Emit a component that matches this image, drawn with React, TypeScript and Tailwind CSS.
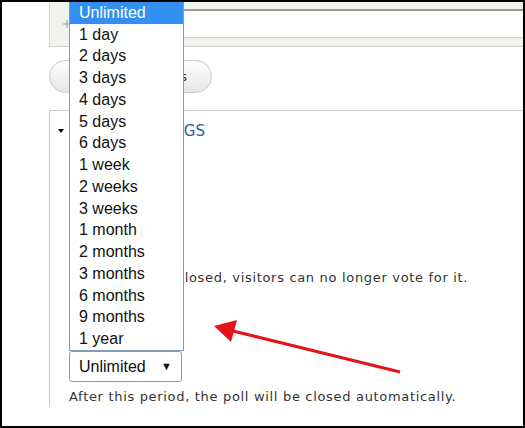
const durations = [
  "Unlimited",
  "1 day",
  "2 days",
  "3 days",
  "4 days",
  "5 days",
  "6 days",
  "1 week",
  "2 weeks",
  "3 weeks",
  "1 month",
  "2 months",
  "3 months",
  "6 months",
  "9 months",
  "1 year",
];

const App = () => {
  return (
    <div className="relative w-[525px] h-[428px] overflow-hidden border-2 border-black bg-white font-['DejaVu_Sans',sans-serif] text-[#333]">
      <div className="pl-[47px]">
        {/* choice row */}
        <div className="flex h-[45px] items-start border-b border-l border-[#cfcfcf] bg-[#f3f3ee]">
          <svg className="ml-[13px] mt-[18px]" width="8" height="8" viewBox="0 0 8 8">
            <path d="M4 0v8M0 4h8" stroke="#9aa3b0" strokeWidth="1.2" />
          </svg>
          <div className="ml-[16px] mt-[7px] h-[29px] flex-1 border-l border-t-2 border-b border-l-[#bbb] border-t-[#9a9a9a] border-b-[#d0d0d0] bg-white" />
        </div>

        {/* more choices button */}
        <div className="mt-[13px] flex h-[33px] w-[163px] items-center justify-end rounded-full border border-[#c8c8c8] bg-gradient-to-b from-[#fdfdfd] to-[#e6e6e6] pr-[24px] text-[13px] text-[#333]">
          More choices
        </div>

        {/* poll settings fieldset */}
        <div className="mt-[17px] border-l border-t border-[#c8c8c8]">
          <div className="flex h-[40px] items-center">
            <span className="ml-[8px] h-0 w-0 border-x-[3.5px] border-t-[4px] border-x-transparent border-t-black" />
            <span className="ml-[3px] w-[138px] whitespace-nowrap text-right text-[15px] uppercase text-[#22609f]">Poll settings</span>
          </div>
          <div className="pl-[19px] tracking-[0.68px]">
            {/* poll status radios sit under the open list */}
            <div className="h-[118px]" />
            <div className="ml-[2px] text-[13px] leading-[18px]">
              When a poll is closed, visitors can no longer vote for it.
            </div>
            <div className="h-[64px]" />

            {/* select with open list */}
            <div className="relative w-[113px] tracking-normal">
              <div className="absolute bottom-full left-0 w-[115px] border border-[#7f9db9] bg-white font-['Liberation_Sans',Arial,sans-serif] text-[16px] text-[#111]">
                {durations.map((d, i) => (
                  <div
                    key={d}
                    className={
                      i === 0
                        ? "flex h-[21.75px] items-center bg-[#3390f0] pl-[9px] text-white"
                        : "flex h-[21.75px] items-center pl-[9px]"
                    }
                  >
                    {d}
                  </div>
                ))}
              </div>
              <div className="flex h-[31px] items-center justify-between rounded-[3px] border border-[#7f9db9] pl-[9px] pr-[9px] font-['Liberation_Sans',Arial,sans-serif] text-[16px] text-[#111]">
                <span>Unlimited</span>
                <span className="text-[11px]">▼</span>
              </div>
            </div>

            <div className="mt-[6px] text-[13px] leading-[18px]">
              After this period, the poll will be closed automatically.
            </div>
          </div>
        </div>
      </div>

      {/* red arrow */}
      <svg className="pointer-events-none absolute left-0 top-0" width="525" height="428" viewBox="-2 -2 525 428">
        <line x1="396" y1="368" x2="225" y2="326" stroke="#e3151a" strokeWidth="3" />
        <polygon points="210,322 233,316 227,338" fill="#e3151a" />
      </svg>
    </div>
  );
};

export default App;
